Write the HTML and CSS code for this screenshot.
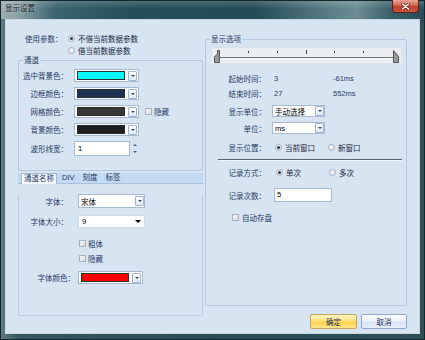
FILE: index.html
```html
<!DOCTYPE html>
<html>
<head>
<meta charset="utf-8">
<link rel="stylesheet" href="styles.css">
</head>
<body>
<div class="window">
  <div class="titlebar">
    <span class="title">显示设置</span>
    <div class="close">
      <svg width="9" height="7" viewBox="0 0 9 7"><path d="M1.5 1 L7.5 6 M7.5 1 L1.5 6" stroke="#5a1a12" stroke-width="2.6" stroke-linecap="round"/><path d="M1.5 1 L7.5 6 M7.5 1 L1.5 6" stroke="#ffffff" stroke-width="1.5" stroke-linecap="round"/></svg>
    </div>
  </div>
  <div class="client">
    <div class="main">
      <div class="left">
        <div class="params">
          <div class="prow"><span class="plabel">使用参数：</span><span class="radio checked"></span><span class="rtext">不借当前数据参数</span></div>
          <div class="prow"><span class="plabel"></span><span class="radio"></span><span class="rtext">借当前数据参数</span></div>
        </div>

        <div class="group channel">
          <div class="gtitle">通道</div>
          <div class="crow first"><span class="clabel">选中背景色：</span><div class="ccombo"><span class="swatch sw-cyan"></span><span class="ddbtn"></span></div></div>
          <div class="crow"><span class="clabel">边框颜色：</span><div class="ccombo"><span class="swatch sw-navy"></span><span class="ddbtn"></span></div></div>
          <div class="crow"><span class="clabel">网格颜色：</span><div class="ccombo"><span class="swatch sw-grey"></span><span class="ddbtn"></span></div><span class="check hide-check"></span><span class="ctext">隐藏</span></div>
          <div class="crow"><span class="clabel">背景颜色：</span><div class="ccombo"><span class="swatch sw-black"></span><span class="ddbtn"></span></div></div>
          <div class="crow spinrow"><span class="clabel">波形线宽：</span><div class="spin">1</div><div class="spinbtns"><span class="up"></span><span class="down"></span></div></div>
        </div>

        <div class="tabs">
          <div class="tabstrip"><span class="tab active">通道名称</span><span class="tab">DIV</span><span class="tab">刻度</span><span class="tab">标签</span></div>
          <div class="tabbody">
            <div class="frow font-row"><span class="flabel">字体：</span><div class="fcombo"><span class="ftext">宋体</span><span class="ddbtn"></span></div></div>
            <div class="frow size-row"><span class="flabel">字体大小：</span><div class="scombo"><span class="ftext">9</span><span class="sarrow"></span></div></div>
            <div class="cbrow bold-row"><span class="check"></span><span class="ctext">粗体</span></div>
            <div class="cbrow hide-row"><span class="check"></span><span class="ctext">隐藏</span></div>
            <div class="frow color-row"><span class="flabel wide">字体颜色：</span><div class="ccombo fcolor"><span class="swatch sw-red"></span><span class="ddbtn"></span></div></div>
          </div>
        </div>
      </div>

      <div class="group options">
        <div class="gtitle">显示选项</div>
        <div class="trackbar">
          <svg width="189" height="15" viewBox="0 0 189 15">
            <line x1="3" y1="9.5" x2="186" y2="9.5" stroke="#6b737c" stroke-width="1"/>
            <line x1="3" y1="10.5" x2="186" y2="10.5" stroke="#ffffff" stroke-width="1"/>
            <rect x="36" y="3" width="1" height="2" fill="#444"/>
            <rect x="65" y="3" width="1" height="2" fill="#444"/>
            <rect x="94" y="2" width="1" height="4" fill="#444"/>
            <rect x="122" y="3" width="1" height="2" fill="#444"/>
            <rect x="151" y="3" width="1" height="2" fill="#444"/>
            <path d="M2.5 14.5 V8.5 L5.5 6.5 V2.5 H7.5 V14.5 Z" fill="#9a9a9a" stroke="#555" stroke-width="1"/>
            <path d="M181.5 2.5 L186.5 8.5 V14.5 H181.5 Z" fill="#9a9a9a" stroke="#555" stroke-width="1"/>
          </svg>
        </div>
        <div class="irow first-info"><span class="ilabel">起始时间：</span><span class="ival">3</span><span class="ival2">-61ms</span></div>
        <div class="irow second-info"><span class="ilabel">结束时间：</span><span class="ival">27</span><span class="ival2">552ms</span></div>
        <div class="irow unit-row"><span class="ilabel">显示单位：</span><div class="ucombo"><span class="ftext">手动选择</span><span class="ddbtn"></span></div></div>
        <div class="irow unit2-row"><span class="ilabel">单位：</span><div class="ucombo"><span class="ftext">ms</span><span class="ddbtn"></span></div></div>
        <div class="irow pos-row"><span class="ilabel">显示位置：</span><div class="ropts"><span class="ropt"><span class="radio checked"></span><span class="rtext">当前窗口</span></span><span class="ropt"><span class="radio"></span><span class="rtext">新窗口</span></span></div></div>
        <div class="separator"></div>
        <div class="irow rec-row"><span class="ilabel">记录方式：</span><div class="ropts rec"><span class="ropt"><span class="radio checked"></span><span class="rtext">单次</span></span><span class="ropt"><span class="radio"></span><span class="rtext">多次</span></span></div></div>
        <div class="irow count-row"><span class="ilabel">记录次数：</span><div class="cinput">5</div></div>
        <div class="cbrow auto-row"><span class="check"></span><span class="ctext">自动存盘</span></div>
      </div>
    </div>
    <div class="footer">
      <button class="btn ok">确定</button>
      <button class="btn cancel">取消</button>
    </div>
  </div>
</div>
</body>
</html>
```
FILE: styles.css
```css
* { box-sizing: border-box; }
html, body { margin: 0; padding: 0; }
body {
  width: 425px; height: 340px; overflow: hidden;
  font-family: "Liberation Sans", "Noto Sans CJK SC", sans-serif;
  font-size: 7.5px;
  color: #1f3a66;
  background: #2c4a53;
}
.window {
  width: 425px; height: 340px;
  display: flex; flex-direction: column;
  background: linear-gradient(90deg, #5f7c83 0, #35575f 4%, #2b4b54 50%, #2e4e57 100%);
  border: 1px solid #16252a;
  padding: 0 4px 5px 4px;
}
.titlebar {
  height: 18px;
  margin: 0 -4px;
  padding-left: 4px;
  display: flex; justify-content: space-between; align-items: flex-start;
  background:
    linear-gradient(180deg, rgba(255,255,255,0.18) 0, rgba(255,255,255,0) 45%),
    linear-gradient(90deg, #9aaeb2 0, #8ba1a6 4%, #3a6270 13%, #264e5a 30%, #234a56 60%, #5a7f88 78%, #6b8c94 84%, #3a606b 92%, #2a4d57 100%);
}
.title {
  padding-top: 3px;
  line-height: 10px;
  color: #1a2126;
  text-shadow: 0 0 3px rgba(220,235,240,0.7);
}
.close {
  width: 27px; height: 13px;
  margin-top: -1px; margin-right: 5px;
  border: 1px solid #5b2119;
  border-top: none;
  border-radius: 0 0 4px 4px;
  background: linear-gradient(180deg, #e7a69a 0, #d5705e 40%, #c0402c 55%, #c8573f 100%);
  display: flex; align-items: center; justify-content: center;
}
.client {
  flex: 1;
  border: 1px solid #c9d7e0;
  background: #d7e4f2;
  display: flex; flex-direction: column;
  padding: 11px 12px 4px 12px;
}
.main {
  height: 276px;
  display: flex; gap: 2px;
  align-items: flex-start;
}
.left {
  width: 185px;
  display: flex; flex-direction: column;
}
.params { padding-top: 1px; }
.prow {
  display: flex; align-items: center;
  height: 12px; padding-left: 7px;
}
.plabel { width: 43px; }
.radio {
  width: 7px; height: 7px; border-radius: 50%;
  border: 1px solid #a6b0bd;
  background: radial-gradient(circle at 40% 40%, #ffffff 0, #dfe4ea 70%);
  margin-right: 3px;
  display: inline-flex; align-items: center; justify-content: center;
  flex: none;
}
.radio.checked::after {
  content: ""; width: 3px; height: 3px; border-radius: 50%;
  background: #2a3446;
}
.rtext { color: #1a2640; white-space: nowrap; }

.group {
  border: 1px solid #b4c8e1;
  border-radius: 2px;
}
.gtitle {
  width: fit-content;
  margin: -5px 0 0 4px;
  padding: 0 1px;
  line-height: 9px;
  background: #d7e4f2;
  color: #1f3a66;
}
.channel { margin-top: 4px; height: 111px; }
.crow {
  display: flex; align-items: center;
  height: 13px; margin-top: 5px;
}
.crow.first { margin-top: 4px; }
.crow.spinrow { height: 15px; }
.clabel {
  width: 50px; text-align: right; padding-right: 1px; margin-right: 5px;
  white-space: nowrap;
}
.ccombo {
  width: 65px; height: 13px;
  border: 1px solid #a5b9d2;
  background: #fff;
  display: flex; align-items: center;
  padding: 0 1px 0 2px; gap: 3px;
}
.swatch { flex: 1; height: 9px; border: 1px solid #2a2f36; }
.sw-cyan { background: #00ffff; }
.sw-navy { background: #1c3354; }
.sw-grey { background: #363636; }
.sw-black { background: #1e1e1e; }
.sw-red { background: #ff0000; }
.ddbtn {
  width: 9px; height: 10px; flex: none;
  border: 1px solid #a0b5d0;
  border-radius: 1px;
  background: linear-gradient(180deg, #fdfeff 0, #dde8f5 100%);
  display: flex; align-items: center; justify-content: center;
}
.ddbtn::after {
  content: "";
  border-left: 2px solid transparent;
  border-right: 2px solid transparent;
  border-top: 2px solid #34455e;
}
.check {
  width: 7px; height: 7px; flex: none;
  border: 1px solid #a9b1bc;
  background: linear-gradient(135deg, #f4f5f7 0, #d7dbe1 100%);
}
.hide-check { margin-left: 6px; }
.ctext { margin-left: 2px; white-space: nowrap; }
.spin {
  width: 56px; height: 15px;
  border: 1px solid #a7bad3;
  background: #fff;
  color: #000;
  padding-left: 3px;
  line-height: 13px;
}
.spinbtns {
  width: 8px; height: 15px; margin-left: 1px;
  display: flex; flex-direction: column;
}
.spinbtns span {
  flex: 1; display: flex; align-items: center; justify-content: center;
}
.spinbtns .up::after {
  content: ""; border-left: 2px solid transparent; border-right: 2px solid transparent;
  border-bottom: 2px solid #4c5f80;
}
.spinbtns .down::after {
  content: ""; border-left: 2px solid transparent; border-right: 2px solid transparent;
  border-top: 2px solid #4c5f80;
}

.tabs { margin-top: 2px; }
.tabstrip {
  height: 11px;
  background: #c4d9f2;
  display: flex; align-items: flex-end;
  padding-left: 3px; gap: 2px;
  border-bottom: 1px solid #a9c0dc;
}
.tab { padding: 0 3px; height: 10px; line-height: 10px; white-space: nowrap; }
.tab.active {
  background: #f6f9fd;
  border: 1px solid #a2bad9;
  border-bottom: none;
  padding: 0 2px;
  height: 11px;
  margin-bottom: -1px;
  line-height: 9px;
}
.tabbody {
  height: 122px;
  border: 1px solid #b9cce3;
  border-top: none;
  border-radius: 0 0 2px 2px;
}
.frow { display: flex; align-items: center; }
.font-row { margin-top: 10px; height: 14px; }
.size-row { margin-top: 7px; height: 13px; }
.color-row { margin-top: 7px; height: 13px; }
.flabel {
  width: 50px; text-align: right; padding-right: 1px; margin-right: 9px;
  white-space: nowrap;
}
.flabel.wide { width: 56px; padding-right: 0; margin-right: 3px; }
.fcombo {
  width: 67px; height: 14px;
  border: 1px solid #a8bbd4;
  background: #fff;
  display: flex; align-items: center;
  padding-left: 2px;
}
.ftext { flex: 1; color: #000; white-space: nowrap; }
.scombo {
  width: 67px; height: 13px;
  border: 1px solid #d2dce8;
  background: #fff;
  display: flex; align-items: center;
  padding-left: 3px; padding-right: 3px;
}
.sarrow {
  border-left: 3px solid transparent;
  border-right: 3px solid transparent;
  border-top: 3px solid #000;
}
.cbrow { display: flex; align-items: center; height: 12px; }
.bold-row { margin-top: 9px; padding-left: 60px; }
.hide-row { margin-top: 3px; padding-left: 60px; }
.fcolor { width: 65px; }

.options { margin-top: 8px; width: 202px; height: 267px; }
.trackbar {
  margin: 4px 0 0 6px;
  width: 189px; height: 15px;
  background: #eceff2;
}
.trackbar svg { display: block; }
.irow { display: flex; align-items: center; height: 12px; }
.ilabel {
  width: 60px; text-align: right; margin-right: 6px; white-space: nowrap;
}
.ival { width: 61px; padding-left: 2px; }
.ival2 { white-space: nowrap; }
.first-info { margin-top: 9px; }
.second-info { margin-top: 3px; }
.unit-row { margin-top: 6px; }
.unit2-row { margin-top: 5px; }
.ucombo {
  width: 53px; height: 12px;
  border: 1px solid #a8bbd4;
  background: #fff;
  display: flex; align-items: center;
  padding-left: 2px;
}
.ucombo .ddbtn { height: 10px; }
.pos-row { margin-top: 7px; }
.ropts { display: flex; margin-left: 3px; }
.ropts.rec { margin-left: 4px; }
.ropt { width: 53px; display: flex; align-items: center; }
.separator {
  margin: 6px 4px 0 12px;
  height: 2px;
  border-top: 1px solid #58616c;
  border-bottom: 1px solid #f4f8fc;
}
.rec-row { margin-top: 5px; }
.count-row { margin-top: 10px; height: 14px; }
.cinput {
  margin-left: 2px;
  width: 58px; height: 14px;
  border: 1px solid #a8bbd4;
  background: #fff;
  color: #000;
  padding-left: 2px;
  line-height: 12px;
}
.auto-row { margin-top: 9px; padding-left: 26px; }
.auto-row .ctext { margin-left: 3px; }

.footer {
  margin-top: 7px; height: 15px;
  display: flex; justify-content: flex-end; gap: 4px;
}
.btn {
  height: 15px; padding: 0;
  font-family: "Liberation Sans", "Noto Sans CJK SC", sans-serif;
  font-size: 7.5px; color: #1b2f57;
  border-radius: 2px;
}
.btn.ok {
  width: 47px;
  border: 1px solid #c3a45c;
  background: linear-gradient(180deg, #fff5c9 0, #ffe27e 45%, #ffd347 55%, #ffe590 100%);
}
.btn.cancel {
  width: 46px;
  border: 1px solid #8fa9cc;
  background: linear-gradient(180deg, #ffffff 0, #edf3fb 45%, #d8e5f5 55%, #e6eef9 100%);
}
```
